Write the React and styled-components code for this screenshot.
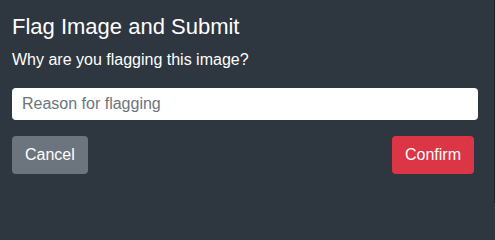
import styled, { createGlobalStyle } from "styled-components";

const GlobalStyle = createGlobalStyle`
  html, body {
    margin: 0;
    background: #2e3640;
    font-family: "Liberation Sans", Arial, sans-serif;
  }
`;

const Modal = styled.div`
  width: 495px;
  height: 203px;
  box-sizing: border-box;
  background: #2e3640;
  border-right: 1px solid #1c2127;
  color: #fff;
  padding: 14px 12px 0 12px;
  display: flex;
  flex-direction: column;
`;

const Title = styled.h5`
  margin: 0;
  font-size: 22px;
  font-weight: 400;
  line-height: 26px;
`;

const Label = styled.p`
  margin: 10px 0 0 0;
  font-size: 16px;
  line-height: 20px;
`;

const Input = styled.input`
  margin-top: 18px;
  width: 466px;
  height: 32px;
  box-sizing: border-box;
  border: none;
  border-radius: 4px;
  padding: 0 10px;
  font-family: inherit;
  font-size: 16px;
  color: #333;
  background: #fff;
  outline: none;

  &::placeholder {
    color: #6c757d;
  }
`;

const Footer = styled.div`
  margin-top: 16px;
  width: 462px;
  display: flex;
  justify-content: space-between;
`;

const Button = styled.button`
  height: 38px;
  padding: 0 13px;
  border: none;
  border-radius: 4px;
  font-family: inherit;
  font-size: 16px;
  color: #fff;
  background: ${(p) => (p.$danger ? "#dc3545" : "#6c757d")};
  cursor: pointer;
`;

const App = () => {
  return (
    <>
      <GlobalStyle />
      <Modal>
        <Title>Flag Image and Submit</Title>
        <Label>Why are you flagging this image?</Label>
        <Input placeholder="Reason for flagging" />
        <Footer>
          <Button>Cancel</Button>
          <Button $danger>Confirm</Button>
        </Footer>
      </Modal>
    </>
  );
};

export default App;
